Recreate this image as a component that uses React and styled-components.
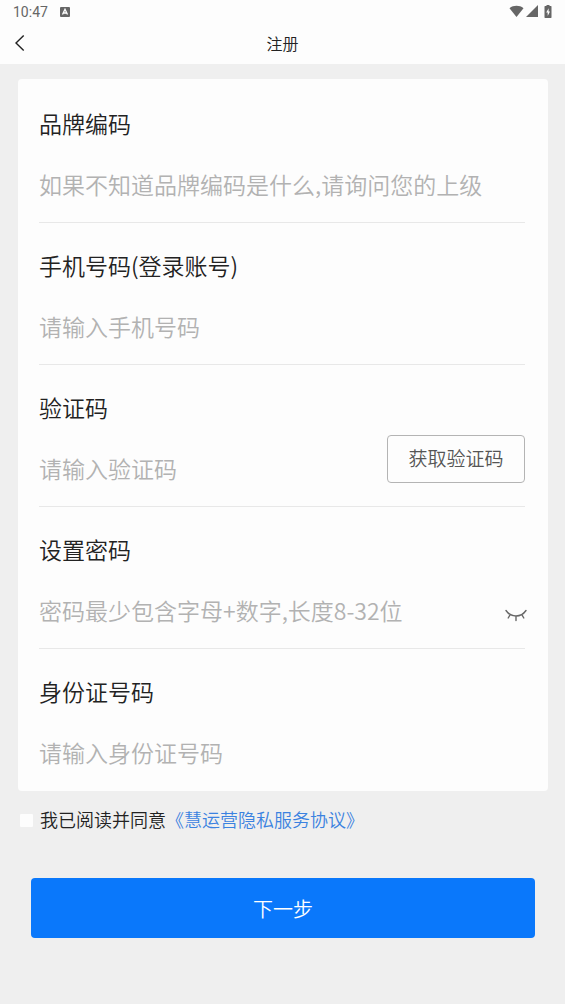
import React, { useState } from "react";
import styled, { createGlobalStyle } from "styled-components";

const GlobalStyle = createGlobalStyle`
  * { box-sizing: border-box; }
  body {
    margin: 0;
    background: #efefef;
    color: #222;
    font-family: "Noto Sans CJK SC", sans-serif;
    font-weight: 350;
  }
  button, input { font-family: inherit; font-weight: inherit; }
`;

const Header = styled.header`
  background: #fdfdfd;
`;

const StatusBar = styled.div`
  display: flex;
  align-items: center;
  justify-content: space-between;
  height: 24px;
  padding: 0 13px;
  color: #666;
  font: 14px/24px Roboto, sans-serif;
`;

const StatusGroup = styled.div`
  display: flex;
  align-items: center;
  gap: ${(p) => p.$gap}px;
  svg { display: block; }
`;

const NavBar = styled.nav`
  display: grid;
  grid-template-columns: 40px 1fr 40px;
  align-items: center;
  height: 40px;
  padding-bottom: 2px;
`;

const BackButton = styled.button`
  display: flex;
  padding: 0 0 0 14px;
  border: 0;
  background: none;
  color: #222;
`;

const Title = styled.h1`
  margin: 0;
  text-align: center;
  font-size: 16px;
  line-height: 24px;
  font-weight: inherit;
`;

const Form = styled.form`
  padding: 15px 17px 24px 18px;
`;

const Card = styled.div`
  padding: 2px 23px 0 21px;
  border-radius: 4px;
  background: #fdfdfd;
`;

const Field = styled.div`
  display: flex;
  flex-direction: column;
  height: 142px;
  padding-top: 23px;
  border-bottom: 1px solid #e8e8e8;
  &:last-child { border-bottom: 0; }
`;

const Label = styled.label`
  align-self: flex-start;
  font-size: 23px;
  line-height: 38px;
`;

const Row = styled.div`
  display: flex;
  align-items: center;
  height: 48px;
  margin-top: 18px;
`;

const Input = styled.input`
  flex: 1;
  min-width: 0;
  height: 48px;
  padding: 0;
  border: 0;
  outline: 0;
  background: none;
  color: #222;
  font-size: 23px;
  &::placeholder { color: #b2b2b2; opacity: 1; }
`;

const CodeButton = styled.button`
  align-self: flex-start;
  width: 138px;
  height: 48px;
  margin-top: -9px;
  padding: 0 0 3px;
  border: 1px solid #b4b4b4;
  border-radius: 4px;
  background: none;
  color: #555;
  font-size: 19px;
`;

const EyeButton = styled.button`
  display: flex;
  margin-right: -2px;
  padding: 10px 0 0;
  border: 0;
  background: none;
  color: #666;
`;

const Agreement = styled.div`
  display: flex;
  align-items: center;
  margin-top: 14px;
  padding-left: 2px;
  font-size: 18px;
  line-height: 28px;
`;

const Checkbox = styled.input`
  appearance: none;
  width: 13px;
  height: 13px;
  margin: 2px 7px 0 0;
  border-radius: 1px;
  background: #fdfdfd;
  &:checked { background: #0a78fb; }
`;

const AgreementLink = styled.a`
  color: #3b82e0;
  text-decoration: none;
`;

const SubmitButton = styled.button`
  display: block;
  width: calc(100% - 26px);
  height: 60px;
  margin: 45px 13px 0;
  padding: 0;
  border: 0;
  border-radius: 4px;
  background: #0a78fb;
  color: #fff;
  font-size: 20px;
`;

const fields = [
  { id: "brand", label: "品牌编码", hint: "如果不知道品牌编码是什么,请询问您的上级" },
  { id: "phone", label: "手机号码(登录账号)", hint: "请输入手机号码", type: "tel" },
  { id: "code", label: "验证码", hint: "请输入验证码" },
  { id: "password", label: "设置密码", hint: "密码最少包含字母+数字,长度8-32位", type: "password" },
  { id: "identity", label: "身份证号码", hint: "请输入身份证号码" },
];

function ClosedEye() {
  return (
    <svg width="22" height="13" viewBox="0 0 22 13" fill="none" stroke="currentColor" strokeWidth="1.4" strokeLinecap="round">
      <path d="M1 1.5C6 8.8 16 8.8 21 1.5M5.2 5.6L3.2 9M11 7.2V11.5M16.8 5.6L18.8 9" />
    </svg>
  );
}

export default function App() {
  const [visible, setVisible] = useState(false);
  return (
    <>
      <GlobalStyle />
      <Header>
        <StatusBar>
          <StatusGroup $gap={12}>
            <span>10:47</span>
            <svg width="10" height="10" viewBox="0 0 10 10">
              <rect width="10" height="10" rx="1" fill="#666" />
              <path d="M2.5 7.5L5 2.3L7.5 7.5M3.6 6H6.4" fill="none" stroke="#fff" strokeWidth="1.3" />
            </svg>
          </StatusGroup>
          <StatusGroup $gap={2}>
            <svg width="15" height="14" viewBox="0 0 15 14" fill="#666">
              <path d="M0.5 3.2C4.5 0 10.5 0 14.5 3.2L7.5 12Z" />
            </svg>
            <svg width="12" height="14" viewBox="0 0 12 14" fill="#666">
              <path d="M12 0V12H0Z" />
            </svg>
            <svg width="12" height="14" viewBox="0 0 12 14">
              <path d="M6.5 1V0H9.5V1H11Q11.5 1 11.5 1.7V12.3Q11.5 13 11 13H5Q4.5 13 4.5 12.3V1.7Q4.5 1 5 1Z" fill="#666" />
              <path d="M8.6 3.2L6.2 7.5H7.7V10.9L10 6.5H8.6Z" fill="#fff" />
            </svg>
          </StatusGroup>
        </StatusBar>
        <NavBar>
          <BackButton type="button" aria-label="返回">
            <svg width="11" height="18" viewBox="0 0 11 18" fill="none" stroke="currentColor" strokeWidth="1.4">
              <path d="M9.7 1.5L2 9L9.7 16.5" />
            </svg>
          </BackButton>
          <Title>注册</Title>
        </NavBar>
      </Header>
      <Form onSubmit={(e) => e.preventDefault()}>
        <Card>
          {fields.map(({ id, label, hint, type = "text" }) => (
            <Field key={id}>
              <Label htmlFor={id}>{label}</Label>
              <Row>
                <Input id={id} type={id === "password" && visible ? "text" : type} placeholder={hint} />
                {id === "code" && <CodeButton type="button">获取验证码</CodeButton>}
                {id === "password" && (
                  <EyeButton type="button" aria-label="显示密码" onClick={() => setVisible(!visible)}>
                    <ClosedEye />
                  </EyeButton>
                )}
              </Row>
            </Field>
          ))}
        </Card>
        <Agreement>
          <Checkbox id="agree" type="checkbox" />
          <label htmlFor="agree">我已阅读并同意</label>
          <AgreementLink href="#privacy">《慧运营隐私服务协议》</AgreementLink>
        </Agreement>
        <SubmitButton type="submit">下一步</SubmitButton>
      </Form>
    </>
  );
}
